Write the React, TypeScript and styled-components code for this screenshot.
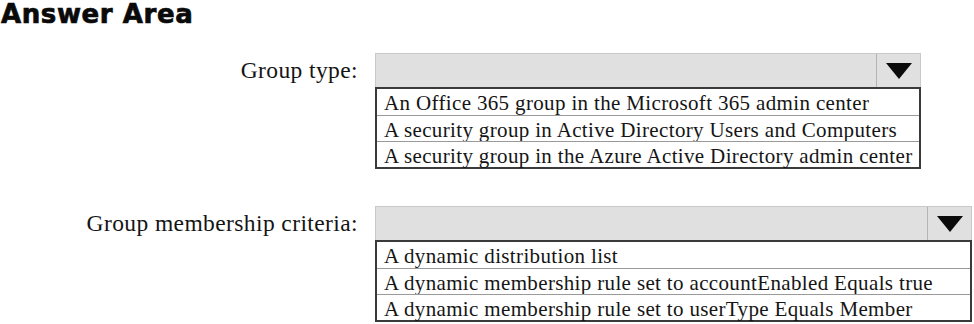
import React from "react";
import styled, { createGlobalStyle } from "styled-components";

const GlobalStyle = createGlobalStyle`
  html, body {
    margin: 0;
    padding: 0;
    background: #ffffff;
  }
  body {
    font-family: "Liberation Serif", "Times New Roman", serif;
    color: #111111;
  }
`;

const Page = styled.div`
  width: 974px;
  height: 324px;
  overflow: hidden;
  background: #ffffff;
`;

const Title = styled.h1`
  margin: 0;
  padding-left: 1px;
  font-family: "DejaVu Sans", "Liberation Sans", Arial, sans-serif;
  font-weight: 700;
  font-size: 26px;
  line-height: 28px;
  letter-spacing: 0.6px;
  color: #0a0a0a;
  -webkit-text-stroke: 0.7px #0a0a0a;
`;

const Field = styled.div<{ $top: number }>`
  display: grid;
  grid-template-columns: 358px auto;
  column-gap: 17px;
  align-items: start;
  margin-top: ${(p) => p.$top}px;
`;

const Label = styled.div`
  text-align: right;
  font-size: 23.5px;
  line-height: 35px;
  letter-spacing: 0.4px;
  color: #141414;
`;

const Dropdown = styled.div<{ $width: number }>`
  display: flex;
  flex-direction: column;
  width: ${(p) => p.$width}px;
`;

const SelectBar = styled.div`
  display: flex;
  justify-content: flex-end;
  height: 34px;
  box-sizing: border-box;
  background: #e0e0e0;
  border: 1px solid #c9c9c9;
  border-bottom: none;
`;

const ArrowButton = styled.div`
  display: flex;
  align-items: center;
  justify-content: center;
  width: 43px;
  border-left: 1px solid #b4b4b4;
`;

const OptionList = styled.div`
  display: flex;
  flex-direction: column;
  border: 2px solid #3a3a3a;
  background: #ffffff;
`;

const Option = styled.div`
  height: 26px;
  box-sizing: border-box;
  padding: 3px 0 0 7px;
  font-size: 21px;
  line-height: 23px;
  letter-spacing: 0.35px;
  white-space: nowrap;
  color: #151515;

  & + & {
    border-top: 1px solid #9a9a9a;
  }
`;

function Arrow() {
  return (
    <svg width="26" height="16" viewBox="0 0 26 16">
      <polygon points="0,0 26,0 13,16" fill="#0b0b0b" />
    </svg>
  );
}

function Choice(props: { label: string; width: number; top: number; options: string[] }) {
  return (
    <Field $top={props.top}>
      <Label>{props.label}</Label>
      <Dropdown $width={props.width}>
        <SelectBar>
          <ArrowButton>
            <Arrow />
          </ArrowButton>
        </SelectBar>
        <OptionList>
          {props.options.map((o) => (
            <Option key={o}>{o}</Option>
          ))}
        </OptionList>
      </Dropdown>
    </Field>
  );
}

export default function App() {
  return (
    <Page>
      <GlobalStyle />
      <Title>Answer Area</Title>
      <Choice
        label="Group type:"
        width={546}
        top={25}
        options={[
          "An Office 365 group in the Microsoft 365 admin center",
          "A security group in Active Directory Users and Computers",
          "A security group in the Azure Active Directory admin center",
        ]}
      />
      <Choice
        label="Group membership criteria:"
        width={597}
        top={37}
        options={[
          "A dynamic distribution list",
          "A dynamic membership rule set to accountEnabled Equals true",
          "A dynamic membership rule set to userType Equals Member",
        ]}
      />
    </Page>
  );
}
